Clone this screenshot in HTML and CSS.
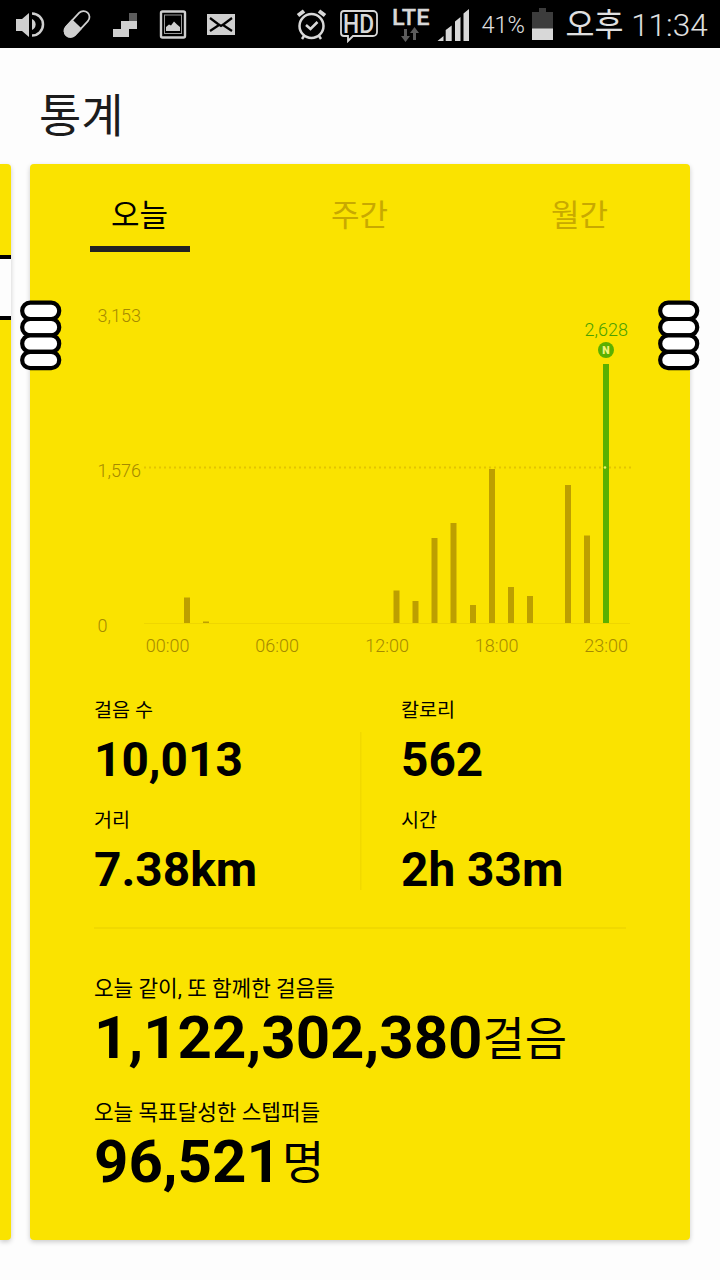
FILE: index.html
```html
<!DOCTYPE html>
<html lang="ko">
<head>
<meta charset="utf-8">
<title>통계</title>
<link rel="stylesheet" href="styles.css">
</head>
<body>
<header class="status">
  <svg class="status-left" width="236" height="48" viewBox="0 0 236 48" fill="#cfcfcf">
    <path d="M16 19h6l7-6v24l-7-6h-6z"/>
    <path d="M32 19a6 6 0 0 1 0 11z"/>
    <path d="M32 13.500a11 11 0 0 1 0 22" fill="none" stroke="#cfcfcf" stroke-width="2.500"/>
    <g transform="rotate(-47 77 24)">
      <rect x="61.500" y="18" width="31" height="12" rx="6" fill="none" stroke="#cfcfcf" stroke-width="1.800"/>
      <path d="M77 17.200v13.600h-9.500a6.800 6.800 0 0 1 0-13.600z"/>
    </g>
    <path d="M113 29h8v-8h16v8h-8v8h-16z"/>
    <path d="M129 13h8v8h-8z" fill="#5c5c5c"/>
    <rect x="161" y="11.500" width="24" height="26" rx="1.500" fill="none" stroke="#cfcfcf" stroke-width="2.400"/>
    <rect x="164.500" y="15" width="17" height="18.500" fill="none" stroke="#999" stroke-width="1"/>
    <path d="M166 31v-4l3-2.500 2 1 3-4 3 3 3 2.500v4z"/>
    <path d="M207 14h28v21h-28z"/>
    <path d="M210 18l8 6 3 2 3-2 8-6M210 31l9-6M232 31l-9-6" fill="none" stroke="#000" stroke-width="2.200"/>
  </svg>
  <svg class="status-right" width="177" height="48" viewBox="294 0 177 48" fill="#d8d8d8">
    <g fill="none" stroke="#d8d8d8" stroke-width="2.500">
      <circle cx="311.500" cy="26" r="12"/>
      <path d="M306 25l4.500 4 7-7M304 36l-2 3M319 36l2 3"/>
      <path d="M298 15.500l6-4.500M325 15.500l-6-4.500" stroke-width="4"/>
      <path d="M344 11h29a4 4 0 0 1 4 4v17a4 4 0 0 1-4 4h-20l-5 5v-5h-4a3 3 0 0 1-3-3V14a3 3 0 0 1 3-3z" stroke-width="1.800"/>
    </g>
    <text class="hd" x="343" y="32.500" textLength="31" lengthAdjust="spacingAndGlyphs">HD</text>
    <text class="lte" x="392" y="25" textLength="37.500" lengthAdjust="spacingAndGlyphs">LTE</text>
    <path d="M404 29h3v7h3l-4.500 6-4.500-6h3zM413 40v-7h-3l4.500-6 4.500 6h-3v7z" fill="#5c5c5c"/>
    <path d="M437.500 41l6-5v5zM445.700 30l6-4.500V41h-6zM455 21.500l5.500-4.500v24H455zM463.500 13.500l5.500-4.500v32h-5.500z"/>
  </svg>
  <span class="percent">41%</span>
  <svg class="battery" width="21" height="48" viewBox="0 0 21 48">
    <path d="M0 12h7V8h7v4h7v17H0z" fill="#3c3c3c"/>
    <path d="M0 28.500h21V40H0z" fill="#d8d8d8"/>
  </svg>
  <span class="clock"><span class="meridiem">오후</span> 11:34</span>
</header>

<h1 class="title">통계</h1>

<main class="pager">
  <div class="peek"><div class="peek-slot"></div></div>
  <section class="card">
    <svg class="binder binder-left" width="42" height="71" viewBox="0 0 42 71"><use href="#rings"/></svg>
    <svg class="binder binder-right" width="42" height="71" viewBox="0 0 42 71">
      <g id="rings" fill="#fff" stroke="#000" stroke-width="4.200">
        <rect x="2.200" y="2.600" width="37" height="16.400" rx="8"/>
        <rect x="2.200" y="19" width="37" height="16.400" rx="8"/>
        <rect x="2.200" y="35.400" width="37" height="16.400" rx="8"/>
        <rect x="2.200" y="51.800" width="37" height="16.400" rx="8"/>
      </g>
    </svg>
    <nav class="tabs">
      <div class="tab tab-active">오늘</div>
      <div class="tab">주간</div>
      <div class="tab">월간</div>
    </nav>
    <svg class="chart" width="660" height="380" viewBox="30 290 660 380">
      <g class="axis">
        <text x="97.500" y="322">3,153</text>
        <text x="97.500" y="477">1,576</text>
        <text x="97.500" y="632">0</text>
        <g text-anchor="middle">
          <text x="167.700" y="651.500">00:00</text>
          <text x="277.200" y="651.500">06:00</text>
          <text x="387.200" y="651.500">12:00</text>
          <text x="496.700" y="651.500">18:00</text>
          <text x="606.200" y="651.500">23:00</text>
        </g>
      </g>
      <path d="M144 623.500H630" stroke="#efd600"/>
      <g fill="#bd9f00">
        <rect x="184" y="597.500" width="6" height="25.500"/>
        <rect x="203" y="621.500" width="6" height="1.500"/>
        <rect x="393.500" y="590.500" width="6" height="32.500"/>
        <rect x="412.500" y="601" width="6" height="22"/>
        <rect x="431.500" y="538" width="6" height="85"/>
        <rect x="450.500" y="523" width="6" height="100"/>
        <rect x="470" y="605" width="6" height="18"/>
        <rect x="489" y="469" width="6" height="154"/>
        <rect x="508" y="587" width="6" height="36"/>
        <rect x="527" y="596" width="6" height="27"/>
        <rect x="565" y="485" width="6" height="138"/>
        <rect x="584" y="535.500" width="6" height="87.500"/>
      </g>
      <path d="M144 467.500H631" stroke="#e3c500" stroke-width="2" stroke-dasharray="2 3"/>
      <rect x="603" y="364" width="6" height="259" fill="#5bb000"/>
      <circle cx="605" cy="467.500" r="1.300" fill="#e5f36a"/>
      <text class="peak" x="606.300" y="336" text-anchor="middle">2,628</text>
      <circle cx="606" cy="350" r="8" fill="#5bb000"/>
      <text class="badge" x="606" y="353.500" text-anchor="middle">N</text>
    </svg>
    <div class="stats">
      <div class="col">
        <div class="label">걸음 수</div><div class="value">10,013</div>
        <div class="label">거리</div><div class="value">7.38km</div>
      </div>
      <div class="col col-right">
        <div class="label">칼로리</div><div class="value">562</div>
        <div class="label">시간</div><div class="value">2h 33m</div>
      </div>
    </div>
    <div class="totals">
      <div class="caption">오늘 같이, 또 함께한 걸음들</div>
      <div class="total">1,122,302,380<span class="unit">걸음</span></div>
      <div class="caption">오늘 목표달성한 스텝퍼들</div>
      <div class="total">96,521<span class="unit unit-people">명</span></div>
    </div>
  </section>
</main>
</body>
</html>
```
FILE: styles.css
```css
* { box-sizing: border-box; }
body {
  margin: 0;
  width: 720px;
  height: 1280px;
  overflow: hidden;
  background: #fdfdfd;
  color: #000;
  font-family: Roboto, "Noto Sans CJK KR", sans-serif;
}
.status {
  display: flex;
  height: 48px;
  background: #000;
  color: #e0e0e0;
  white-space: nowrap;
}
.status-right { margin-left: 58px; }
.hd { font: 500 26px Roboto, sans-serif; }
.lte { font: 500 22px Roboto, sans-serif; stroke: #d8d8d8; stroke-width: .3; }
.percent {
  width: 50px;
  margin-left: 10.500px;
  line-height: 51px;
  font-size: 23.500px;
  font-weight: 300;
}
.battery { flex: none; }
.clock {
  margin-left: 13px;
  line-height: 52px;
  font-size: 31.500px;
  font-weight: 300;
}
.meridiem { font-weight: 400; }
.title {
  height: 116px;
  margin: 0;
  padding-left: 39px;
  line-height: 137px;
  font-size: 46px;
  font-weight: 400;
  color: #1c1c1c;
}
.pager { display: flex; gap: 19px; height: 1076px; }
.peek, .card {
  background: #fae300;
  box-shadow: 0 2px 5px rgba(0, 0, 0, .2);
}
.peek { width: 11px; padding-top: 91px; border-radius: 0 4px 4px 0; }
.peek-slot {
  height: 65px;
  border: solid #000;
  border-width: 4px 0;
  background: #fdfdfd;
}
.card { position: relative; width: 660px; border-radius: 4px; }
.binder { position: absolute; top: 136px; }
.binder-left { left: -10px; }
.binder-right { left: 628px; }
.tabs { display: grid; grid-template-columns: repeat(3, 1fr); height: 126px; }
.tab {
  position: relative;
  height: 88px;
  padding-right: 1px;
  line-height: 104px;
  text-align: center;
  font-size: 31px;
  color: #c8a900;
}
.tab-active { color: #000; }
.tab-active::after {
  content: "";
  position: absolute;
  left: 59.500px;
  bottom: 0.500px;
  width: 100px;
  height: 6px;
  background: #222;
}
.chart { display: block; }
.axis { font: 300 18px Roboto, sans-serif; fill: #a58a00; }
.peak { font: 300 18px Roboto, sans-serif; fill: #4ba000; }
.badge { font: 900 10.500px Roboto, sans-serif; fill: #f5f37a; }
.stats {
  display: grid;
  grid-template-columns: 265.500px 1fr;
  height: 258.500px;
  margin: 0 64px;
  padding-top: 27px;
  border-bottom: 2px solid #f1d900;
}
.col { height: 195px; }
.col-right {
  padding-left: 41.500px;
  background: linear-gradient(#f1d900, #f1d900) 0 35px / 1.500px 158px no-repeat;
}
.label { height: 28px; line-height: 28px; font-size: 19.600px; }
.value { height: 81.500px; line-height: 71px; font-size: 47.800px; font-weight: 700; }
.totals { padding: 46.500px 64px 0; }
.caption { height: 28px; line-height: 28px; font-size: 21.300px; }
.total { height: 96px; line-height: 70px; font-size: 60px; font-weight: 700; white-space: nowrap; }
.unit { display: inline-block; line-height: 1; font-size: 46px; font-weight: 400; transform: translateY(-3px); }
.unit-people { margin-left: 1px; }
```
